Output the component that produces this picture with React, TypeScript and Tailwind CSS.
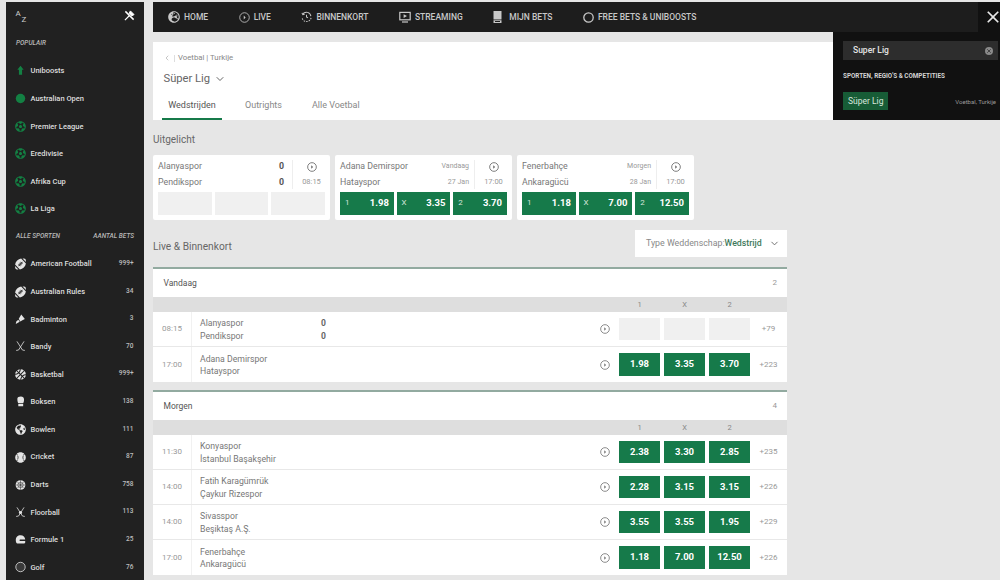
import { ChevronDown, ChevronLeft, X } from "lucide-react";
import type { ReactNode } from "react";
import { FaBaseballBall, FaBasketballBall, FaFootballBall, FaFutbol, FaGlobeAmericas, FaGlobeEurope } from "react-icons/fa";
import { MdClose } from "react-icons/md";

function Glyph({ children }: { children: ReactNode }) {
  return (
    <svg width="13" height="13" viewBox="0 0 14 14" fill="currentColor">
      {children}
    </svg>
  );
}

function Sticks({ ball }: { ball?: boolean }) {
  return (
    <svg width="13" height="13" viewBox="0 0 14 14" fill="none" stroke="currentColor" strokeWidth="1">
      <path d="M2.5 0.5 9.5 11.5 12.5 12M11.5 0.5 4.5 11.5 1.5 12" />
      {ball && <circle cx="7" cy="7" r="2" fill="currentColor" stroke="none" />}
    </svg>
  );
}

const popular: [ReactNode, string][] = [
  [
    <Glyph>
      <path d="M7 1 11 6H9V12.5H5V6H3z" />
    </Glyph>,
    "Uniboosts",
  ],
  [
    <Glyph>
      <circle cx="7" cy="7" r="6" />
    </Glyph>,
    "Australian Open",
  ],
  [<FaFutbol size={11} />, "Premier League"],
  [<FaFutbol size={11} />, "Eredivisie"],
  [<FaFutbol size={11} />, "Afrika Cup"],
  [<FaFutbol size={11} />, "La Liga"],
];

const sports: [ReactNode, string, string][] = [
  [<FaFootballBall size={12} />, "American Football", "999+"],
  [<FaFootballBall size={12} />, "Australian Rules", "34"],
  [
    <Glyph>
      <path d="M8 0.5 12.5 6.5 6.5 9.5 4.8 6.2zM6 10 1 12.8 1.6 9.6 4.2 7.4z" />
    </Glyph>,
    "Badminton",
    "3",
  ],
  [<Sticks />, "Bandy", "70"],
  [<FaBasketballBall size={11} />, "Basketbal", "999+"],
  [
    <Glyph>
      <path d="M3 3.5C3 1.5 5 0.5 7.5 0.5S11.5 2 11.5 4.5 11 8 10.5 9H4C3.4 8 3 6 3 3.5zM4.2 10h6.2V13H4.2z" />
    </Glyph>,
    "Boksen",
    "138",
  ],
  [<FaGlobeAmericas size={11} />, "Bowlen", "111"],
  [<FaBaseballBall size={11} />, "Cricket", "87"],
  [
    <svg width="12" height="12" viewBox="0 0 14 14" fill="none" stroke="currentColor">
      <circle cx="7" cy="7" r="6.2" fill="currentColor" stroke="none" />
      <path d="M7 1v12M1 7h12M2.8 2.8l8.4 8.4M11.2 2.8l-8.4 8.4" stroke="#212121" strokeWidth="0.6" />
      <circle cx="7" cy="7" r="3.4" stroke="#212121" strokeWidth="0.6" />
    </svg>,
    "Darts",
    "758",
  ],
  [<Sticks ball />, "Floorball", "113"],
  [
    <Glyph>
      <path d="M1 8C1 3.5 3.5 1.5 7 1.5S13 4 13 7H6.5C5.5 7 5.5 9 6.5 9H13V10.5C13 11.5 12.5 12 11.5 12H3C1.8 12 1 10.5 1 8z" />
    </Glyph>,
    "Formule 1",
    "25",
  ],
  [
    <svg width="12" height="12" viewBox="0 0 14 14" fill="#3a3a3a" stroke="currentColor" strokeWidth="1">
      <circle cx="7" cy="7" r="6" />
    </svg>,
    "Golf",
    "76",
  ],
];

function ClockPlay({ size = 10 }: { size?: number }) {
  return (
    <svg width={size} height={size} viewBox="0 0 12 12" fill="none" stroke="currentColor" strokeWidth="0.9">
      <circle cx="6" cy="6" r="5.2" />
      <path d="M5.2 3.8 7.2 6 5.2 8.2" fill="currentColor" stroke="none" />
    </svg>
  );
}

const navItems: [ReactNode, string][] = [
  [<FaGlobeEurope size={12} />, "HOME"],
  [<ClockPlay size={11} />, "LIVE"],
  [
    <svg width="11" height="12" viewBox="0 0 12 12" fill="none" stroke="currentColor" strokeWidth="1.1">
      <path d="M10.8 5A5 5 0 0 0 2 2.6" />
      <path d="M11 7a5 5 0 0 1-9.8 0" strokeDasharray="1.6 1.2" />
      <path d="M6 3.5V6l1.6 1" />
      <path d="M1 1.5 2 3.5 4 3" />
    </svg>,
    "BINNENKORT",
  ],
  [
    <svg width="12" height="12" viewBox="0 0 12 12" fill="none" stroke="currentColor" strokeWidth="1.2">
      <rect x="0.8" y="1.4" width="10.4" height="7.4" />
      <path d="M3 11h6" />
      <path d="M4.6 3.2 8 5.1 4.6 7z" fill="currentColor" stroke="none" />
    </svg>,
    "STREAMING",
  ],
  [
    <svg width="9" height="12" viewBox="0 0 9 12" fill="currentColor" className="mr-[3px]">
      <path d="M0.5 0h8v8.4h-8zM0.5 9.2h8V12h-8zM2 10h5v1H2z" fillRule="evenodd" />
    </svg>,
    "MIJN BETS",
  ],
  [
    <svg width="11" height="11" viewBox="0 0 11 11" fill="none" stroke="currentColor" strokeWidth="1.3">
      <circle cx="5.5" cy="5.5" r="4.7" />
    </svg>,
    "FREE BETS & UNIBOOSTS",
  ],
];

function Sidebar() {
  return (
    <aside className="w-[138px] h-[578px] mt-[2px] ml-[5.5px] shrink-0 bg-[#212121] overflow-hidden text-[#dedede]">
      <div className="flex items-start justify-between h-[32px] pl-[10px] pr-[9px] pt-[8px]">
        <span className="relative block w-[12px] h-[14px] text-[8px] leading-none text-[#d0d0d0]">
          <span className="absolute left-0 top-0">A</span>
          <span className="absolute left-[6px] top-[6px]">Z</span>
        </span>
        <svg width="11" height="11" viewBox="0 0 12 12" fill="white" stroke="white">
          <path d="M7 1 11 5 8.5 6.5 5.5 3.5z" strokeWidth="1" />
          <path d="M6 6 1 11" strokeWidth="1.3" />
          <path d="M1.5 1.5 10.5 10.5" strokeWidth="1.6" />
        </svg>
      </div>
      <div className="h-[23.2px] pl-[10.5px] pt-[4px] text-[6.5px] leading-[10px] font-medium italic text-[#b8b8b8]">POPULAIR</div>
      {popular.map(([icon, name]) => (
        <div key={name} className="flex items-center h-[27.6px] pl-[9.5px]">
          <span className="flex justify-center w-[11px] mr-[4.5px] text-[#138043]">{icon}</span>
          <span className="text-[7.5px] font-medium">{name}</span>
        </div>
      ))}
      <div className="flex justify-between h-[27.4px] pl-[10.5px] pr-[9.5px] pt-[8px] text-[6.5px] leading-[10px] font-medium italic text-[#b8b8b8]">
        <span>ALLE SPORTEN</span>
        <span>AANTAL BETS</span>
      </div>
      {sports.map(([icon, name, count]) => (
        <div key={name} className="flex items-center h-[27.6px] pl-[9.5px] pr-[10px]">
          <span className="flex justify-center w-[11px] mr-[4.5px] text-[#e4e4e4]">{icon}</span>
          <span className="text-[7.5px] font-medium flex-1">{name}</span>
          <span className="text-[6.5px] font-medium text-[#bdbdbd]">{count}</span>
        </div>
      ))}
    </aside>
  );
}

function Odd({ label, value }: { label: string; value: string }) {
  return (
    <div className="flex items-center justify-between w-[54px] h-[22.5px] px-[5px] bg-[#167a4a] text-white">
      <span className="text-[8px] text-[#d5e6dc]">{label}</span>
      <span className="text-[9.5px] font-bold">{value}</span>
    </div>
  );
}

function HighlightCard({
  home,
  away,
  day,
  date,
  time,
  odds,
  live,
}: {
  home: string;
  away: string;
  day?: string;
  date?: string;
  time: string;
  odds?: string[];
  live?: boolean;
}) {
  return (
    <div className="w-[177px] h-[65px] bg-white rounded-[2px] px-[5px] pt-[5px]">
      <div className="flex h-[29px] -mr-[5px]">
        <div className="flex-1 grid grid-cols-[1fr_auto] gap-y-[2px] text-[8.8px] leading-[13px] text-[#777] pr-[5px] border-r border-[#eeeeee]">
          <span>{home}</span>
          <span className={live ? "font-bold text-[#555] pr-[3px]" : "text-[7px] text-[#999]"}>{live ? "0" : day}</span>
          <span>{away}</span>
          <span className={live ? "font-bold text-[#555] pr-[3px]" : "text-[7px] text-[#999] text-right"}>{live ? "0" : date}</span>
        </div>
        <div className="flex flex-col items-center w-[37px] shrink-0 text-[#555]">
          <span className="h-[13px] flex items-center"><ClockPlay size={10} /></span>
          <span className="text-[7.5px] leading-[13px] mt-[2px] text-[#999]">{time}</span>
        </div>
      </div>
      <div className="flex gap-[2.7px] mt-[3px]">
        {odds
          ? odds.map((value, i) => <Odd key={i} label={["1", "X", "2"][i]} value={value} />)
          : [0, 1, 2].map((i) => <div key={i} className="w-[54px] h-[22.5px] bg-[#f0f0f0]" />)}
      </div>
    </div>
  );
}

type Match = { time: string; home: string; away: string; score?: boolean; odds?: string[]; more: string };

function Row({ m, last }: { m: Match; last: boolean }) {
  return (
    <div className={`flex items-center h-[35px] bg-white ${last ? "" : "border-b border-[#e8e8e8]"}`}>
      <div className="flex items-center justify-center w-[39px] h-full border-r border-[#f1f1f1] text-[8px] text-[#999]">{m.time}</div>
      <div className="w-[128px] pl-[8px] pt-[1.5px] text-[8.7px] leading-[12.5px] text-[#777]">
        <div>{m.home}</div>
        <div>{m.away}</div>
      </div>
      <div className="flex-1 pl-[1px] pt-[1.5px] text-[8.5px] leading-[12.5px] font-bold text-[#666]">
        {m.score && (
          <>
            <div>0</div>
            <div>0</div>
          </>
        )}
      </div>
      <span className="text-[#666] mr-[9px]"><ClockPlay size={10} /></span>
      <div className="flex gap-[4px]">
        {[0, 1, 2].map((i) =>
          m.odds ? (
            <div key={i} className="flex items-center justify-center w-[41px] h-[22.5px] bg-[#167a4a] text-white text-[9.5px] font-bold">{m.odds[i]}</div>
          ) : (
            <div key={i} className="w-[41px] h-[22.5px] bg-[#f0f0f0]" />
          ),
        )}
      </div>
      <div className="w-[37px] text-center text-[8px] text-[#999]">{m.more}</div>
    </div>
  );
}

function Section({ title, count, matches }: { title: string; count: string; matches: Match[] }) {
  return (
    <section className="border-t-2 border-[#92aaa0]">
      <div className="flex items-center justify-between h-[28px] pl-[10.5px] pr-[10px] bg-white text-[8.5px] text-[#555]">
        <span>{title}</span>
        <span className="text-[8px] text-[#999]">{count}</span>
      </div>
      <div className="flex items-center justify-end h-[15px] pr-[37px] bg-[#dedede] text-[7.5px] text-[#888]">
        <div className="flex gap-[4px]">
          {["1", "X", "2"].map((l) => (
            <span key={l} className="w-[41px] text-center">{l}</span>
          ))}
        </div>
      </div>
      {matches.map((m, i) => (
        <Row key={m.home} m={m} last={i === matches.length - 1} />
      ))}
    </section>
  );
}

const today: Match[] = [
  { time: "08:15", home: "Alanyaspor", away: "Pendikspor", score: true, more: "+79" },
  { time: "17:00", home: "Adana Demirspor", away: "Hatayspor", odds: ["1.98", "3.35", "3.70"], more: "+223" },
];

const tomorrow: Match[] = [
  { time: "11:30", home: "Konyaspor", away: "İstanbul Başakşehir", odds: ["2.38", "3.30", "2.85"], more: "+235" },
  { time: "14:00", home: "Fatih Karagümrük", away: "Çaykur Rizespor", odds: ["2.28", "3.15", "3.15"], more: "+226" },
  { time: "14:00", home: "Sivasspor", away: "Beşiktaş A.Ş.", odds: ["3.55", "3.55", "1.95"], more: "+229" },
  { time: "17:00", home: "Fenerbahçe", away: "Ankaragücü", odds: ["1.18", "7.00", "12.50"], more: "+226" },
];

export default function App() {
  return (
    <div className="relative flex h-[580px] w-[1000px] overflow-hidden bg-[#e6e6e6]" style={{ fontFamily: "Roboto, sans-serif" }}>
      <Sidebar />
      <main className="ml-[9.5px] flex-1 min-w-0">
        <nav className="flex items-center gap-[30.5px] h-[30px] mt-[2px] pl-[15px] bg-[#1d1d1d] text-[#c8c8c8] text-[8.5px] font-medium">
          {navItems.map(([icon, label]) => (
            <div key={label} className="flex items-center gap-[4px]">
              {icon}
              <span>{label}</span>
            </div>
          ))}
        </nav>

        <div className="h-[78px] mt-[10px] bg-white">
          <div className="flex items-center h-[30px] pl-[10px] pt-[2px] text-[7.8px] text-[#888]">
            <ChevronLeft size={8} className="text-[#aaa]" />
            <span className="ml-[3px] mr-[3px] h-[7px] border-l border-[#ddd]" />
            <span>Voetbal | Turkije</span>
          </div>
          <div className="flex items-center h-[14px] pl-[10.5px] text-[11.2px] text-[#666]">
            Süper Lig
            <ChevronDown size={12} className="ml-[4px]" />
          </div>
          <div className="flex h-[34px] pl-[9px] text-[9px]">
            <div className="flex items-center justify-center w-[60px] h-full pt-[8px] border-b-2 border-[#167a4a] text-[#555]">Wedstrijden</div>
            <div className="flex items-center h-full ml-[23px] pt-[6px] text-[#888]">Outrights</div>
            <div className="flex items-center h-full ml-[30px] pt-[6px] text-[#888]">Alle Voetbal</div>
          </div>
        </div>

        <h2 className="mt-[13px] h-[22px] text-[10px] leading-[14px] font-normal text-[#666]">Uitgelicht</h2>
        <div className="flex gap-[5px]">
          <HighlightCard live home="Alanyaspor" away="Pendikspor" time="08:15" />
          <HighlightCard home="Adana Demirspor" away="Hatayspor" day="Vandaag" date="27 Jan" time="17:00" odds={["1.98", "3.35", "3.70"]} />
          <HighlightCard home="Fenerbahçe" away="Ankaragücü" day="Morgen" date="28 Jan" time="17:00" odds={["1.18", "7.00", "12.50"]} />
        </div>

        <div className="w-[634px]">
          <div className="flex items-center justify-between h-[27px] mt-[10px] mb-[10px]">
            <h2 className="mt-[6px] text-[10.2px] font-normal text-[#666]">Live &amp; Binnenkort</h2>
            <div className="flex items-center w-[152px] h-[27px] pl-[11px] bg-white text-[8.8px] text-[#888]">
              Type Weddenschap:<span className="font-medium text-[#3f7a5c]">Wedstrijd</span>
              <ChevronDown size={11} className="ml-[7px] text-[#666]" />
            </div>
          </div>
          <Section title="Vandaag" count="2" matches={today} />
          <div className="h-[8px]" />
          <Section title="Morgen" count="4" matches={tomorrow} />
        </div>
      </main>

      <div className="absolute right-0 top-[2px] flex items-center justify-end w-[22px] h-[30px] bg-[#111111] text-[#e8e8e8]">
        <MdClose size={20} className="-mr-[3px]" />
      </div>
      <div className="absolute left-[833px] top-[32px] w-[167px] h-[88px] bg-[#111111] pl-[10px] pr-[2px] pt-[9px]">
        <div className="flex items-center justify-between h-[19px] pl-[10px] pr-[5px] bg-[#2d2d2d] text-[8.5px] text-[#e4e4e4] font-medium">
          Super Lig
          <X size={8} strokeWidth={3} className="rounded-full bg-[#8a8a8a] text-[#2d2d2d] p-[1px]" />
        </div>
        <div className="mt-[11px] text-[6.3px] leading-[10px] font-bold text-[#d4d4d4]">SPORTEN, REGIO'S &amp; COMPETITIES</div>
        <div className="flex items-center justify-between mt-[11px] pr-[2px]">
          <span className="flex items-center h-[18px] px-[5px] bg-[#175c36] text-[8.5px] text-[#d8e6dd]">Süper Lig</span>
          <span className="text-[6px] text-[#9a9a9a]">Voetbal, Turkije</span>
        </div>
      </div>
    </div>
  );
}
